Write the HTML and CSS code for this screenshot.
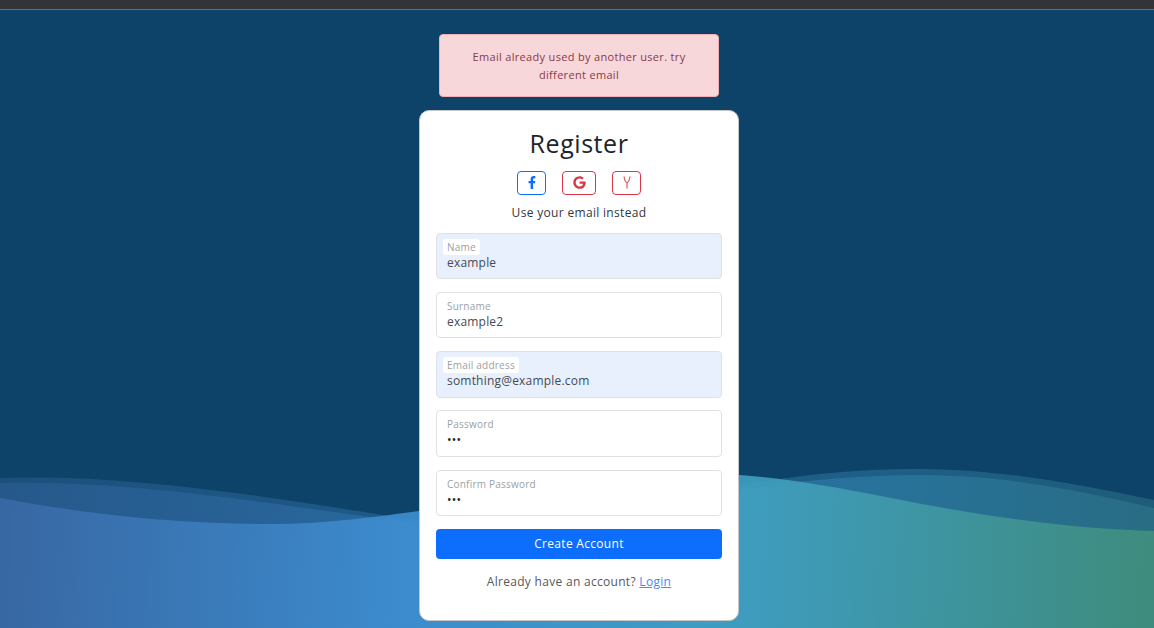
FILE: index.html
```html
<!DOCTYPE html>
<html lang="en">
<head>
  <meta charset="UTF-8">
  <meta name="viewport" content="width=device-width, initial-scale=1.0">
  <title>Register</title>
  <link rel="stylesheet" href="styles.css">
</head>
<body>
  <div class="topbar"></div>

  <svg class="waves" viewBox="0 0 1154 628" preserveAspectRatio="none" aria-hidden="true">
    <defs>
      <linearGradient id="waveFill" gradientUnits="userSpaceOnUse" x1="0" y1="500" x2="1154" y2="560">
        <stop offset="0" stop-color="#3a69a6"/>
        <stop offset="0.35" stop-color="#3f90d4"/>
        <stop offset="0.62" stop-color="#41a3c8"/>
        <stop offset="1" stop-color="#41907c"/>
      </linearGradient>
      <linearGradient id="waveBack" gradientUnits="userSpaceOnUse" x1="0" y1="500" x2="1154" y2="500">
        <stop offset="0" stop-color="#3a69a6"/>
        <stop offset="0.4" stop-color="#3d8ccb"/>
        <stop offset="0.75" stop-color="#3c98c4"/>
        <stop offset="1" stop-color="#3f8f9a"/>
      </linearGradient>
    </defs>
    <path class="wave-back" fill="url(#waveBack)" d="M0,478 C120,474 250,494 383,515 C450,526 520,528 600,512 C680,496 800,468 920,469 C1010,470 1080,485 1154,500 V628 H0 Z"/>
    <path class="wave-back" fill="url(#waveBack)" d="M0,483 C120,480 250,500 383,519 C450,529 520,531 600,516 C680,500 800,474 925,475 C1010,476 1080,491 1154,508 V628 H0 Z"/>
    <path class="wave-front" fill="url(#waveFill)" d="M0,498 C90,515 180,524 267,524 C330,524 380,516 419,511 C520,496 620,472 700,473 C790,475 860,493 950,509 C1030,523 1100,530 1154,531 V628 H0 Z"/>
  </svg>

  <main class="page">
    <div class="alert">Email already used by another user. try different email</div>

    <form class="card">
      <h1>Register</h1>

      <div class="socials">
        <a href="#" class="social social-blue">
          <svg class="icon-f" viewBox="0 0 320 512"><path d="M279.14 288l14.22-92.66h-88.91v-60.13c0-25.35 12.42-50.06 52.24-50.06h40.42V6.26S260.43 0 225.36 0c-73.22 0-121.08 44.38-121.08 124.72v70.62H22.89V288h81.39v224h100.17V288z"/></svg>
        </a>
        <a href="#" class="social social-red social-wide">
          <svg class="icon-g" viewBox="0 0 488 512"><path d="M488 261.8C488 403.3 391.1 504 248 504 110.8 504 0 393.2 0 256S110.8 8 248 8c66.8 0 123 24.5 166.3 64.9l-67.5 64.9C258.5 52.6 94.3 116.6 94.3 256c0 86.5 69.1 156.6 153.7 156.6 98.2 0 135-70.4 140.8-106.9H248v-85.3h236.1c2.3 12.7 3.9 24.9 3.9 41.4z"/></svg>
        </a>
        <a href="#" class="social social-red">
          <svg class="icon-y" viewBox="0 0 8 13"><path d="M1 0.5 C1.5 3.5 2.5 6 4 7 C5.5 6 6.5 3.5 7 0.5 M4 7 V12.5"/></svg>
        </a>
      </div>

      <p class="hint">Use your email instead</p>

      <div class="field field-filled">
        <label for="name">Name</label>
        <input id="name" type="text" value="example">
      </div>
      <div class="field">
        <label for="surname">Surname</label>
        <input id="surname" type="text" value="example2">
      </div>
      <div class="field field-filled field-tall field-tight">
        <label for="email">Email address</label>
        <input id="email" type="text" value="somthing@example.com">
      </div>
      <div class="field field-tall">
        <label for="password">Password</label>
        <input id="password" type="password" value="123">
      </div>
      <div class="field">
        <label for="confirm">Confirm Password</label>
        <input id="confirm" type="password" value="123">
      </div>

      <button type="button" class="submit">Create Account</button>

      <p class="login">Already have an account? <a href="#">Login</a></p>
    </form>
  </main>
</body>
</html>
```

FILE: styles.css
```css
* {
  box-sizing: border-box;
}
html, body {
  height: 100%;
}
body {
  margin: 0;
  overflow: hidden;
  position: relative;
  background-color: #0e4369;
  color: #212529;
  font-family: "Open Sans", "Liberation Sans", sans-serif;
}
.topbar {
  height: 10px;
  background-color: #333437;
  border-bottom: 1px solid #6b6d70;
}
.waves {
  position: absolute;
  left: 0;
  top: 0;
  width: 100%;
  height: 628px;
}
.wave-back {
  opacity: 0.33;
}
.wave-front {
  opacity: 0.88;
}
.page {
  position: relative;
  display: flex;
  flex-direction: column;
  align-items: center;
  padding: 24px 0 0 4px;
}
.alert {
  width: 280px;
  height: 63px;
  padding: 13px 16px;
  margin-bottom: 13px;
  background-color: #f8d7da;
  border: 1px solid #f1aeb5;
  border-radius: 4px;
  color: #8a3a48;
  font-size: 11px;
  letter-spacing: 0.32px;
  line-height: 18px;
  text-align: center;
}
.card {
  width: 320px;
  height: 511px;
  padding: 16px 16px 0;
  background-color: #fff;
  border: 1px solid #c4c6c8;
  border-radius: 10px;
  text-align: center;
}
h1 {
  margin: 0 0 12px;
  font-size: 25px;
  font-weight: 400;
  letter-spacing: 0.55px;
  line-height: 32px;
}
.socials {
  display: flex;
  justify-content: center;
  gap: 16px;
}
.social {
  display: flex;
  align-items: center;
  justify-content: center;
  width: 29px;
  height: 24px;
  padding-bottom: 2px;
  border: 1px solid;
  border-radius: 4px;
}
.social-wide {
  width: 34px;
}
.social-blue {
  border-color: #0d6efd;
  color: #0d6efd;
}
.social-red {
  border-color: #dc3545;
  color: #dc3545;
}
.social svg {
  fill: currentColor;
}
.icon-f {
  width: 8px;
  height: 13px;
}
.icon-g {
  width: 13px;
  height: 13px;
}
.social .icon-y {
  width: 8px;
  height: 13px;
  fill: none;
  stroke: currentColor;
  stroke-opacity: 0.85;
  stroke-width: 1.2;
}
.hint {
  margin: 10px 0 12px;
  font-size: 12px;
  letter-spacing: 0.32px;
  line-height: 16px;
  color: #33373b;
}
.field {
  display: flex;
  flex-direction: column;
  align-items: flex-start;
  height: 46px;
  margin-bottom: 13px;
  padding: 5px 10px 0;
  background-color: #fff;
  border: 1px solid #dee2e6;
  border-radius: 4px;
}
.field-tall {
  height: 47px;
}
.field-tight {
  margin-bottom: 12px;
}
.field-filled {
  background-color: #e8f0fe;
}
.field label {
  height: 16px;
  margin: 0 -4px;
  padding: 0 4px;
  border-radius: 3px;
  background-color: #fff;
  color: #9a9fa4;
  font-size: 10px;
  letter-spacing: 0.22px;
  line-height: 16px;
}
.field input {
  width: 100%;
  padding: 0;
  border: 0;
  outline: 0;
  background: transparent;
  color: #454b52;
  font-family: inherit;
  font-size: 12px;
  letter-spacing: 0.2px;
  line-height: 16px;
}
.field input[type="password"] {
  color: #212529;
}
.submit {
  display: block;
  width: 100%;
  height: 30px;
  padding: 0 0 2px;
  background-color: #0d6efd;
  border: 0;
  border-radius: 4px;
  color: #fff;
  font-family: inherit;
  font-size: 12px;
  letter-spacing: 0.3px;
}
.login {
  margin: 15px 0 0;
  color: #55595e;
  font-size: 12px;
  letter-spacing: 0.3px;
  line-height: 16px;
}
.login a {
  color: #3d8bfd;
}
```
